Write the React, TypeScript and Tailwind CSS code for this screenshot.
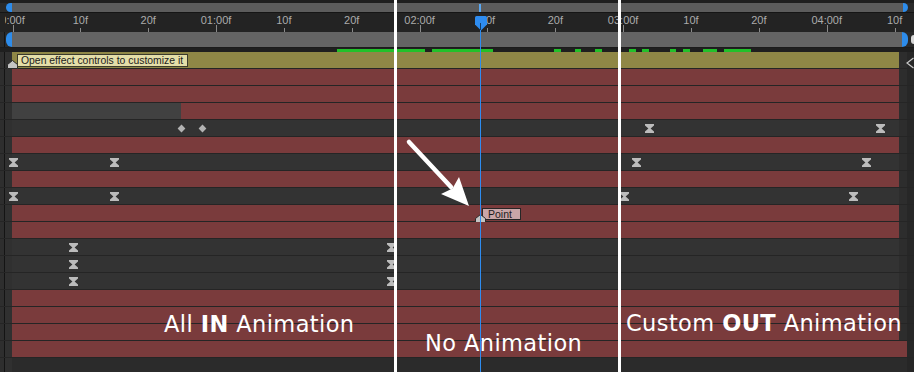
import React from 'react';

type Key = { x: number; t: 'ease' | 'diamond' };
type RowKind = 'olive' | 'red' | 'dark' | 'split' | 'long';
type Row = { kind: RowKind; keys?: Key[] };

const ease = (x: number): Key => ({ x, t: 'ease' });
const dia = (x: number): Key => ({ x, t: 'diamond' });

const ROWS: Row[] = [
  { kind: 'olive' },
  { kind: 'red' },
  { kind: 'red' },
  { kind: 'split' },
  { kind: 'dark', keys: [dia(181), dia(202), ease(649), ease(880)] },
  { kind: 'red' },
  { kind: 'dark', keys: [ease(13), ease(114), ease(636), ease(866)] },
  { kind: 'red' },
  { kind: 'dark', keys: [ease(13), ease(114), ease(624), ease(853)] },
  { kind: 'red' },
  { kind: 'red' },
  { kind: 'dark', keys: [ease(73), ease(391)] },
  { kind: 'dark', keys: [ease(73), ease(391)] },
  { kind: 'dark', keys: [ease(73), ease(391)] },
  { kind: 'red' },
  { kind: 'red' },
  { kind: 'red' },
  { kind: 'long' },
];

const LABELS = ['0:00f', '10f', '20f', '01:00f', '10f', '20f', '02:00f', '10f', '20f', '03:00f', '10f', '20f', '04:00f', '10f'];

// green cache bar segments [from, to] in page x
const CACHE: [number, number][] = [
  [337, 425], [432, 493], [554, 561], [575, 581], [595, 602],
  [629, 636], [642, 649], [670, 676], [683, 690], [703, 717], [724, 751],
];

const TRACK_BG: Record<RowKind, string> = {
  olive: 'bg-[#8f8746]',
  red: 'bg-[#7a3b3c]',
  dark: 'bg-[#333333]',
  split: 'bg-[#7a3b3c]',
  long: 'bg-[#7a3b3c]',
};

const Hourglass = () => (
  <svg width="9" height="9" viewBox="0 0 9 9">
    <path d="M0 0H9V1.6L5.6 4.5L9 7.4V9H0V7.4L3.4 4.5L0 1.6Z" fill="#bcbcbc" />
  </svg>
);

const Diamond = () => (
  <svg width="9" height="9" viewBox="0 0 9 9">
    <path d="M4.5 0.6L8.4 4.5L4.5 8.4L0.6 4.5Z" fill="#b3b3b3" />
  </svg>
);

const Marker = () => (
  <svg width="11" height="9" viewBox="0 0 11 9">
    <path d="M5.5 0.5L10.5 4.5V8.5H0.5V4.5Z" fill="#c4c4c4" stroke="#2a2a2a" strokeWidth="1" />
  </svg>
);

const Gutter = () => (
  <div className="flex w-[12px] shrink-0">
    <div className="w-[4px] bg-[#2e2e2e]" />
    <div className="w-[1px] bg-[#141414]" />
    <div className="flex-1 bg-[#303030]" />
  </div>
);

const TimelineRow = ({ row, index }: { row: Row; index: number }) => {
  const long = row.kind === 'long';
  return (
    <div className="relative flex h-[17px] border-b border-[#252525]">
      <Gutter />
      <div className={`${long ? 'w-[895px]' : 'w-[887px]'} flex shrink-0 ${TRACK_BG[row.kind]}`}>
        {row.kind === 'split' && <div className="w-[169px] bg-[#414141]" />}
      </div>
      {!long && <div className="w-[8px] bg-[#2d2d2d]" />}
      <div className="flex-1 bg-[#272727]" />

      {row.keys?.map((k, i) => (
        <div key={i} className="absolute top-[3.5px] flex" style={{ left: k.x - 4.5 }}>
          {k.t === 'ease' ? <Hourglass /> : <Diamond />}
        </div>
      ))}

      {index === 0 && (
        <>
          <div className="absolute left-[7px] top-[8px] flex">
            <Marker />
          </div>
          <div className="absolute left-[17px] top-[2px] h-[13px] w-[171px] border border-[#3b3a2c] bg-[#e4dea8] pl-[3px] text-[10.4px] leading-[11px] text-[#1c1c1c]">
            Open effect controls to customize it
          </div>
        </>
      )}

      {index === 9 && (
        <>
          <div className="absolute left-[482px] top-[3px] h-[12px] w-[39px] border border-[#262626] bg-[#c9a6a8] pl-[5px] text-[10.5px] leading-[10px] text-[#1c1c1c]">
            Point
          </div>
          <div className="absolute left-[475px] top-[9px] flex">
            <Marker />
          </div>
        </>
      )}
    </div>
  );
};

export default function App() {
  return (
    <div
      className="relative h-[372px] w-[914px] overflow-hidden bg-[#2a2a2a]"
      style={{ fontFamily: '"Liberation Sans", Arial, sans-serif' }}
    >
      {/* navigator bar */}
      <div className="h-[3px] bg-[#1f1f1f]" />
      <div className="flex h-[9px] bg-[#2a2a2a]">
        <div className="w-[6px]" />
        <div className="w-[6px] rounded-l-full bg-[#2d8ceb]" />
        <div className="flex-1 bg-[#5c5c5c]" />
        <div className="w-[5px] rounded-r-full bg-[#2d8ceb]" />
        <div className="w-[6px]" />
      </div>

      {/* ruler */}
      <div className="relative h-[20px] border-t border-[#151515] bg-[#232323]">
        <div className="absolute inset-y-0 left-[5px] right-0 overflow-hidden">
          {LABELS.map((label, i) => {
            const x = 12.5 + i * 67.85 - 5;
            const major = i % 3 === 0;
            return (
              <React.Fragment key={i}>
                <div
                  className="absolute top-[2px] -translate-x-1/2 whitespace-nowrap text-[11px] leading-none text-[#ababab]"
                  style={{ left: x }}
                >
                  {label}
                </div>
                <div
                  className={`absolute bottom-0 w-[1px] bg-[#8a8a8a] ${major ? 'h-[7px]' : 'h-[4px]'}`}
                  style={{ left: x }}
                />
              </React.Fragment>
            );
          })}
        </div>
      </div>

      {/* work area */}
      <div className="flex h-[16px] border-b border-[#1b1b1b] bg-[#2a2a2a]">
        <div className="w-[4px]" />
        <div className="w-[1px] bg-[#141414]" />
        <div className="w-[1px]" />
        <div className="w-[6px] rounded-l-full bg-[#2d8ceb]" />
        <div className="flex-1 bg-[#646464]" />
        <div className="w-[6px] rounded-r-full bg-[#2d8ceb]" />
        <div className="w-[3px]" />
        <div className="my-[3px] w-[3px] rounded-l-[3px] bg-[#d6d6d6]" />
      </div>

      {/* cache strip */}
      <div className="relative h-[4px] bg-[#1f1f1f]">
        {CACHE.map(([a, b], i) => (
          <div key={i} className="absolute top-[1px] h-[3px] bg-[#22c02a]" style={{ left: a, width: b - a }} />
        ))}
      </div>

      {/* layers */}
      {ROWS.map((row, i) => (
        <TimelineRow key={i} row={row} index={i} />
      ))}
      <div className="flex h-[14px]">
        <Gutter />
        <div className="w-[895px] bg-[#2b2b2b]" />
        <div className="flex-1 bg-[#262626]" />
      </div>

      {/* side icon */}
      <svg className="absolute left-[906px] top-[57px]" width="8" height="12" viewBox="0 0 8 12">
        <path d="M7.5 1L1 6L7.5 11" fill="none" stroke="#c8c8c8" strokeWidth="1.2" />
      </svg>

      {/* section dividers */}
      <div className="absolute bottom-0 left-[394px] top-0 w-[3px] bg-white" />
      <div className="absolute bottom-0 left-[618px] top-0 w-[3px] bg-white" />

      {/* captions */}
      <div
        className="absolute left-[164px] top-[313px] whitespace-nowrap text-[22.5px] leading-none tracking-[0.4px] text-white"
        style={{ fontFamily: '"DejaVu Sans", sans-serif' }}
      >
        All <b className="font-bold">IN</b> Animation
      </div>
      <div
        className="absolute left-[425px] top-[332px] whitespace-nowrap text-[22.5px] leading-none tracking-[0.4px] text-white"
        style={{ fontFamily: '"DejaVu Sans", sans-serif' }}
      >
        No Animation
      </div>
      <div
        className="absolute left-[626px] top-[312px] whitespace-nowrap text-[22.5px] leading-none tracking-[0.4px] text-white"
        style={{ fontFamily: '"DejaVu Sans", sans-serif' }}
      >
        Custom <b className="font-bold">OUT</b> Animation
      </div>

      {/* arrow */}
      <svg className="absolute left-[400px] top-[135px]" width="80" height="80" viewBox="0 0 80 80">
        <line x1="9" y1="7" x2="51" y2="52" stroke="white" strokeWidth="4.5" strokeLinecap="round" />
        <path d="M69 71L41 59L52.5 53.5L59 42Z" fill="white" />
      </svg>

      {/* current time indicator */}
      <div className="absolute left-[479px] top-[4px] h-[8px] w-[2px] bg-[#5aa8f2]" />
      <div className="absolute bottom-0 left-[480px] top-[30px] w-[1px] bg-[#2e8cf0]" />
      <svg className="absolute left-[475px] top-[16px]" width="12" height="15" viewBox="0 0 12 15">
        <path d="M1.5 0H10.5Q12 0 12 1.5V8.5L6 14.5L0 8.5V1.5Q0 0 1.5 0Z" fill="#2e8cf0" />
        <rect x="5" y="7" width="1" height="7" fill="#173d66" />
      </svg>
    </div>
  );
}
